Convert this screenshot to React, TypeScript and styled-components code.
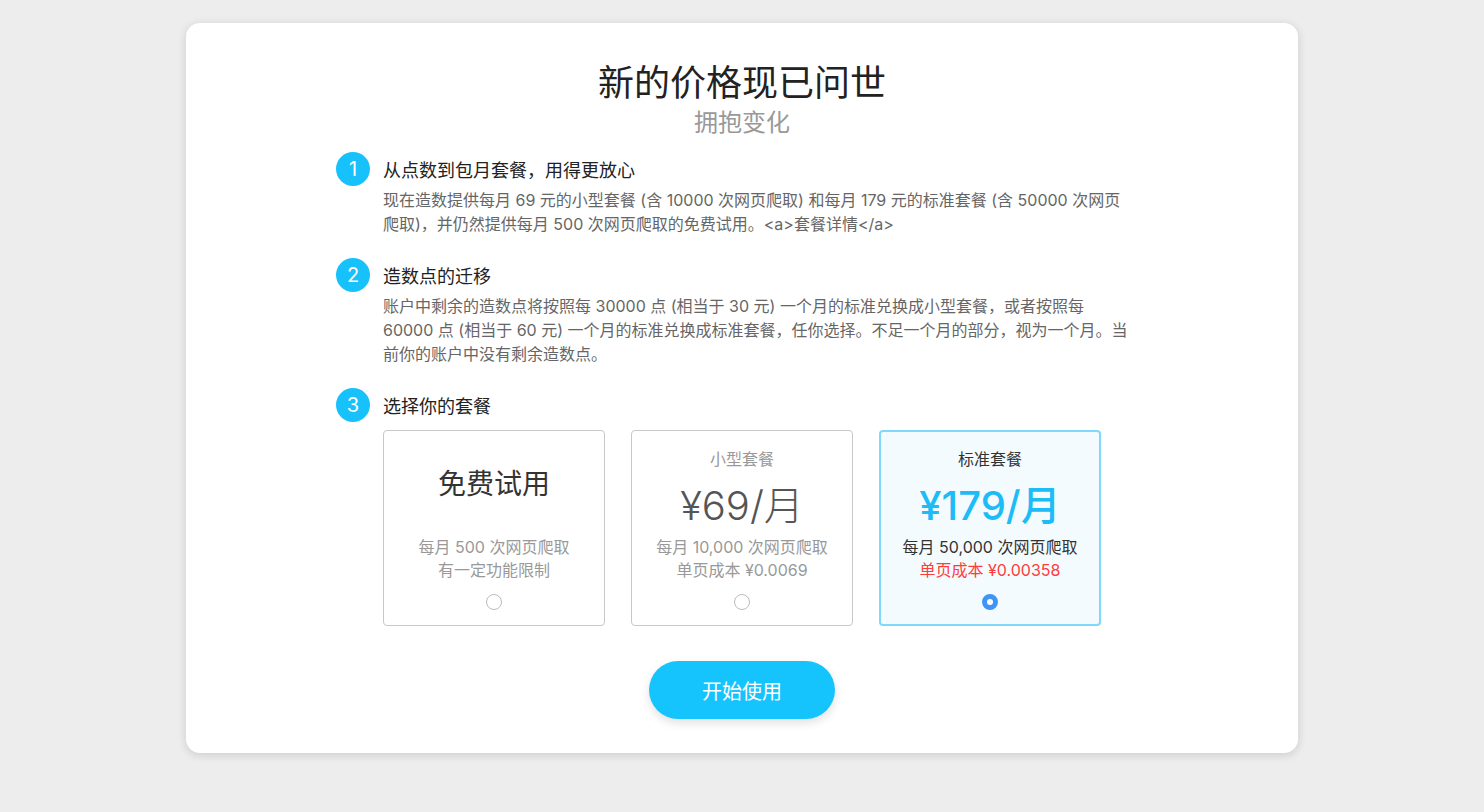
import styled, { createGlobalStyle } from "styled-components";

const GlobalStyle = createGlobalStyle`
  html, body {
    margin: 0;
    padding: 0;
    background: #ededed;
    font-family: Inter, "Noto Sans CJK SC", sans-serif;
  }
  * {
    box-sizing: border-box;
  }
`;

const Page = styled.div`
  min-height: 812px;
  padding-top: 23px;
  display: flex;
  justify-content: center;
  align-items: flex-start;
`;

const Panel = styled.div`
  width: 1112px;
  background: #fff;
  border-radius: 14px;
  box-shadow: 0 2px 10px rgba(0, 0, 0, 0.14);
  padding: 35px 0 34px;
  display: flex;
  flex-direction: column;
  align-items: center;
`;

const Title = styled.h1`
  margin: 0;
  font-size: 36px;
  font-weight: 400;
  line-height: 50px;
  color: #222;
`;

const Subtitle = styled.h2`
  margin: 0;
  font-size: 24px;
  font-weight: 400;
  line-height: 30px;
  color: #999;
`;

const Steps = styled.div`
  width: 812px;
  margin-top: 14px;
  display: flex;
  flex-direction: column;
  gap: 22px;
`;

const Step = styled.div`
  display: flex;
  flex-direction: column;
`;

const StepHead = styled.div`
  display: flex;
  align-items: center;
  gap: 13px;
  height: 34px;
`;

const StepNum = styled.span`
  width: 34px;
  height: 34px;
  border-radius: 50%;
  background: #17c1fb;
  color: #fff;
  font-size: 20px;
  display: flex;
  align-items: center;
  justify-content: center;
`;

const StepTitle = styled.span`
  font-size: 18px;
  color: #222;
`;

const StepBody = styled.div`
  margin: 2px 0 0 47px;
  font-size: 16px;
  line-height: 24px;
  color: #666;
  white-space: nowrap;
`;

const Plans = styled.div`
  margin: 8px 0 0 47px;
  display: flex;
  gap: 26px;
`;

const PlanCard = styled.label<{ $active?: boolean }>`
  width: 222px;
  height: 196px;
  border-radius: 4px;
  border: ${(p) => (p.$active ? "2px solid #7fd9fb" : "1px solid #c8c8c8")};
  background: ${(p) => (p.$active ? "#f3fbff" : "#fff")};
  padding-top: ${(p) => (p.$active ? "15px" : "16px")};
  display: flex;
  flex-direction: column;
  align-items: center;
  text-align: center;
`;

const PlanHead = styled.div`
  height: 84px;
  display: flex;
  flex-direction: column;
  align-items: center;
  justify-content: center;
`;

const PlanName = styled.div<{ $active?: boolean }>`
  font-size: 16px;
  line-height: 24px;
  color: ${(p) => (p.$active ? "#333" : "#999")};
`;

const PlanPrice = styled.div<{ $active?: boolean }>`
  margin-top: 10px;
  font-size: 40px;
  line-height: 50px;
  font-weight: ${(p) => (p.$active ? 500 : 300)};
  color: ${(p) => (p.$active ? "#1dbcf6" : "#555")};
`;

const FreeTitle = styled.div`
  font-size: 28px;
  line-height: 40px;
  color: #333;
  margin-bottom: 10px;
`;

const PlanDesc = styled.div<{ $active?: boolean }>`
  margin-top: 5px;
  font-size: 16px;
  line-height: 23px;
  color: ${(p) => (p.$active ? "#333" : "#999")};
`;

const Cost = styled.div`
  color: #ff3b3b;
`;

const Radio = styled.span<{ $checked?: boolean }>`
  margin-top: 12px;
  width: 16px;
  height: 16px;
  border-radius: 50%;
  border: ${(p) => (p.$checked ? "5px solid #3f95f5" : "1px solid #bbb")};
  background: #fff;
`;

const StartButton = styled.button`
  margin-top: 35px;
  width: 186px;
  height: 58px;
  border: none;
  border-radius: 29px;
  background: #16c4fd;
  color: #fff;
  font-family: inherit;
  font-size: 20px;
  box-shadow: 0 4px 10px rgba(0, 0, 0, 0.12);
  cursor: pointer;
`;

function App() {
  return (
    <>
      <GlobalStyle />
      <Page>
        <Panel>
          <Title>新的价格现已问世</Title>
          <Subtitle>拥抱变化</Subtitle>
          <Steps>
            <Step>
              <StepHead>
                <StepNum>1</StepNum>
                <StepTitle>从点数到包月套餐，用得更放心</StepTitle>
              </StepHead>
              <StepBody>
                现在造数提供每月 69 元的小型套餐 (含 10000 次网页爬取) 和每月 179 元的标准套餐 (含 50000 次网页
                <br />
                爬取)，并仍然提供每月 500 次网页爬取的免费试用。{"<a>套餐详情</a>"}
              </StepBody>
            </Step>
            <Step>
              <StepHead>
                <StepNum>2</StepNum>
                <StepTitle>造数点的迁移</StepTitle>
              </StepHead>
              <StepBody>
                账户中剩余的造数点将按照每 30000 点 (相当于 30 元) 一个月的标准兑换成小型套餐，或者按照每
                <br />
                60000 点 (相当于 60 元) 一个月的标准兑换成标准套餐，任你选择。不足一个月的部分，视为一个月。当
                <br />
                前你的账户中没有剩余造数点。
              </StepBody>
            </Step>
            <Step>
              <StepHead>
                <StepNum>3</StepNum>
                <StepTitle>选择你的套餐</StepTitle>
              </StepHead>
              <Plans>
                <PlanCard>
                  <PlanHead>
                    <FreeTitle>免费试用</FreeTitle>
                  </PlanHead>
                  <PlanDesc>
                    <div>每月 500 次网页爬取</div>
                    <div>有一定功能限制</div>
                  </PlanDesc>
                  <Radio />
                </PlanCard>
                <PlanCard>
                  <PlanHead>
                    <PlanName>小型套餐</PlanName>
                    <PlanPrice>¥69/月</PlanPrice>
                  </PlanHead>
                  <PlanDesc>
                    <div>每月 10,000 次网页爬取</div>
                    <div>单页成本 ¥0.0069</div>
                  </PlanDesc>
                  <Radio />
                </PlanCard>
                <PlanCard $active>
                  <PlanHead>
                    <PlanName $active>标准套餐</PlanName>
                    <PlanPrice $active>¥179/月</PlanPrice>
                  </PlanHead>
                  <PlanDesc $active>
                    <div>每月 50,000 次网页爬取</div>
                    <Cost>单页成本 ¥0.00358</Cost>
                  </PlanDesc>
                  <Radio $checked />
                </PlanCard>
              </Plans>
            </Step>
          </Steps>
          <StartButton>开始使用</StartButton>
        </Panel>
      </Page>
    </>
  );
}

export default App;
